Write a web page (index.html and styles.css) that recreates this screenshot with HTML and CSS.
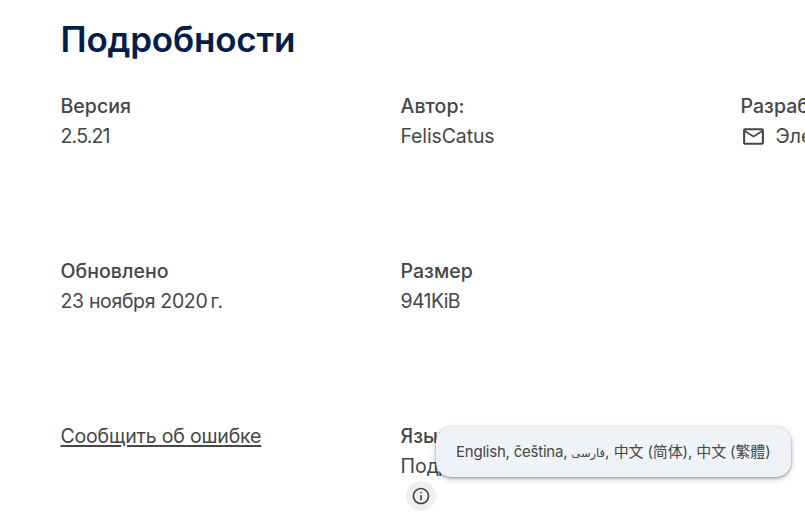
FILE: index.html
```html
<!DOCTYPE html>
<html lang="ru">
<head>
<meta charset="utf-8">
<title>Подробности</title>
<link rel="stylesheet" href="styles.css">
</head>
<body>
<section class="details">
  <h2 class="title">Подробности</h2>
  <ul class="grid">
    <li class="item"><div class="label">Версия</div><div class="t-number">2.5.21</div></li>
    <li class="item"><div class="label">Автор:</div><div class="t-name">FelisCatus</div></li>
    <li class="item"><div class="label">Разработчик</div>
      <div class="mail">
        <svg class="mail-icon" viewBox="0 0 24 24"><path d="M20 4H4c-1.100 0-2 .9-2 2v12c0 1.100.9 2 2 2h16c1.100 0 2-.9 2-2V6c0-1.100-.9-2-2-2Zm0 14H4V8l8 5 8-5v10ZM12 11 4 6h16l-8 5Z"/></svg>
        <span>Электронная почта</span>
      </div>
    </li>
    <li class="item"><div class="label">Обновлено</div><div class="t-date">23 ноября 2020&#8201;г.</div></li>
    <li class="item"><div class="label">Размер</div><div class="t-kib">941KiB</div></li>
    <li class="item"></li>
    <li class="item"><a class="report">Сообщить об ошибке</a></li>
    <li class="item languages">
      <div class="label">Языки</div>
      <div>Поддерживается</div>
      <div class="info">
        <svg class="info-icon" viewBox="0 0 24 24"><path d="M11 17h2v-6h-2v6Zm1-8c.6 0 1-.4 1-1s-.4-1-1-1-1 .4-1 1 .4 1 1 1Zm0 13C6.500 22 2 17.500 2 12S6.500 2 12 2s10 4.500 10 10-4.500 10-10 10Zm0-2c4.400 0 8-3.600 8-8s-3.600-8-8-8-8 3.600-8 8 3.600 8 8 8Z"/></svg>
      </div>
      <div class="tooltip"><span class="t-latin">English, čeština, </span><span class="t-farsi">فارسی</span><span class="t-cjk">, 中文 (简体), 中文 (<span lang="zh-Hant" class="hant">繁體</span>)</span></div>
    </li>
  </ul>
</section>
</body>
</html>
```
FILE: styles.css
```css
body {
  margin: 0;
  width: 805px;
  height: 515px;
  overflow: hidden;
  background: #fff;
  color: #444746;
  font: 380 19.5px/30px Inter, "Noto Sans", sans-serif;
}
.details { padding: 17px 0 0 60.5px; }
.title {
  margin: 0 0 30px;
  color: #041e49;
  font-size: 35px;
  font-weight: 600;
  line-height: 44px;
  letter-spacing: -.2px;
}
.grid {
  display: grid;
  grid-template-columns: 340px 340px minmax(0, 1fr);
  grid-template-rows: 165px 165px 94px;
  margin: 0;
  padding: 0;
  list-style: none;
}
.item { white-space: nowrap; }
.label { font-weight: 500; letter-spacing: .05px; }
.t-number { letter-spacing: -.8px; }
.t-name { letter-spacing: -.12px; }
.t-date { letter-spacing: -.34px; }
.t-kib { letter-spacing: -.6px; }
.mail { display: flex; align-items: center; }
.mail-icon { flex: none; width: 25px; height: 25px; margin-right: 10px; fill: currentColor; }
.report { letter-spacing: -.17px; text-decoration: underline; text-underline-offset: 2px; text-decoration-thickness: 2px; }
.languages { position: relative; }
.info {
  display: flex;
  align-items: center;
  justify-content: center;
  width: 30px;
  height: 30px;
  margin-left: 5.5px;
  border-radius: 50%;
  background: #eff1f0;
}
.info-icon { width: 20px; height: 20px; fill: currentColor; }
.tooltip {
  position: absolute;
  left: 35.5px;
  top: 6px;
  box-sizing: border-box;
  width: 355px;
  height: 50px;
  padding-left: 20px;
  border-radius: 15px;
  background: #eff3f8;
  box-shadow: 0 1px 3px rgba(0,0,0,.35), 0 2px 7px rgba(0,0,0,.18);
  font-size: 15px;
  line-height: 48px;
}
.t-latin { letter-spacing: -.22px; }
.t-farsi { font-family: "DejaVu Sans", sans-serif; font-size: 11.5px; }
.t-cjk { font-family: Inter, "Noto Sans CJK SC", sans-serif; letter-spacing: -.12px; }
.hant { font-family: "Noto Sans CJK TC", sans-serif; }
```
